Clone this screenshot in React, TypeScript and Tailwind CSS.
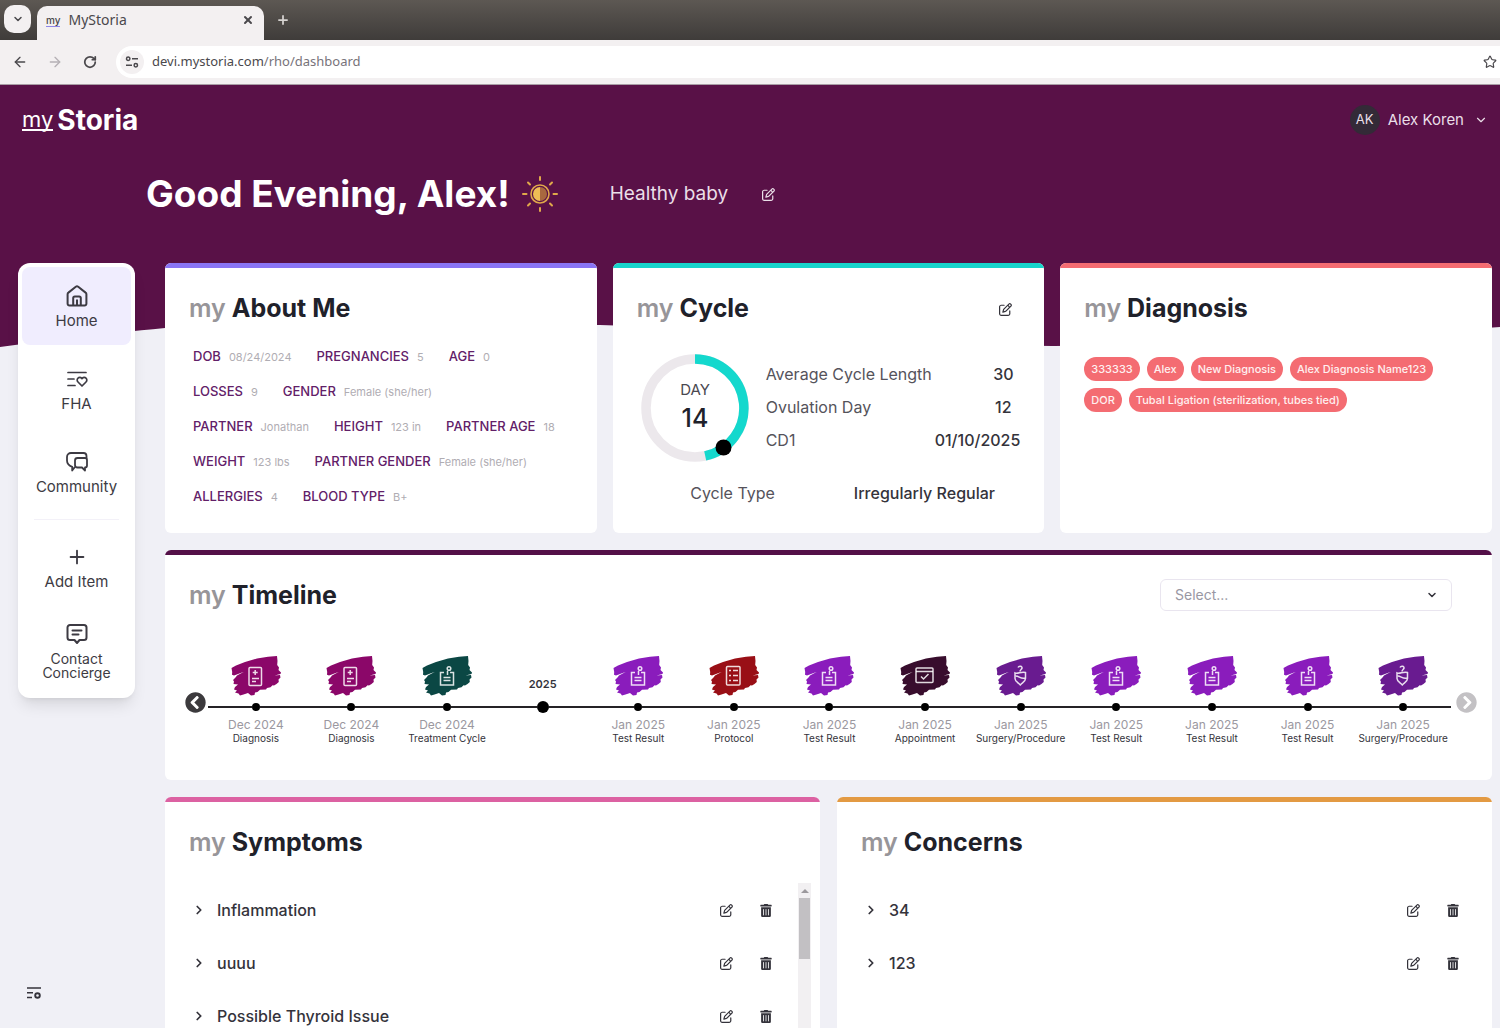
import React from 'react';
import {
    FaChevronCircleLeft,
    FaChevronCircleRight,
    FaTrashAlt,
} from 'react-icons/fa';
import { FaRegPenToSquare } from 'react-icons/fa6';
import {
    ArrowLeft,
    ArrowRight,
    ChevronDown,
    ChevronRight,
    Plus,
    RotateCw,
    Star,
    X,
} from 'lucide-react';

type IconProps = { className?: string };

const HomeIcon = ({ className }: IconProps) => (
    <svg
        viewBox="0 0 22 22"
        className={className}
        fill="none"
        stroke="currentColor"
        strokeWidth="2"
        strokeLinejoin="round"
    >
        <path d="M1.600 9.200a2 2 0 0 1 .8-1.600L9.800 1.700a2 2 0 0 1 2.400 0l7.400 5.900a2 2 0 0 1 .8 1.600v9.600a1.800 1.800 0 0 1-1.800 1.800H3.400a1.800 1.800 0 0 1-1.800-1.800Z" />
        <path d="M7.200 20.400v-7.400a1.600 1.600 0 0 1 1.600-1.600h4.400a1.600 1.600 0 0 1 1.600 1.600v7.400M11 14.500v5.500" />
    </svg>
);

const FhaIcon = ({ className }: IconProps) => (
    <svg
        viewBox="0 0 22 22"
        className={className}
        fill="none"
        stroke="currentColor"
        strokeWidth="1.700"
        strokeLinecap="round"
        strokeLinejoin="round"
    >
        <path d="M2 4.500h18M2 11h6M2 17.500h7" />
        <path d="M16 18l-4-4a2.600 2.600 0 0 1 0-3.800 2.500 2.500 0 0 1 3.600 0l.4.5.4-.5a2.500 2.500 0 0 1 3.600 0 2.600 2.600 0 0 1 0 3.800Z" />
    </svg>
);

const CommunityIcon = ({ className }: IconProps) => (
    <svg
        viewBox="0 0 22 22"
        className={className}
        fill="none"
        stroke="currentColor"
        strokeWidth="1.800"
        strokeLinecap="round"
        strokeLinejoin="round"
    >
        <path d="M8.500 16.500 6.200 19.500v-3.700C2.500 14.500 1 12.500 1 9.500V6a4 4 0 0 1 4-4h12.500A3 3 0 0 1 20.500 5v2" />
        <path d="M11.500 7H19a2 2 0 0 1 2 2v5.500a2 2 0 0 1-2 2v3L16 16.500h-4.500a2.500 2.500 0 0 1-2.500-2.500V9.500A2.500 2.500 0 0 1 11.500 7Z" />
    </svg>
);

const ConciergeIcon = ({ className }: IconProps) => (
    <svg
        viewBox="0 0 22 22"
        className={className}
        fill="none"
        stroke="currentColor"
        strokeWidth="2"
        strokeLinecap="round"
        strokeLinejoin="round"
    >
        <path d="M4 2h14a2.500 2.500 0 0 1 2.500 2.500v10A2.500 2.500 0 0 1 18 17h-4.500L11 20l-2.500-3H4a2.500 2.500 0 0 1-2.500-2.500v-10A2.500 2.500 0 0 1 4 2Z" />
        <path d="M6.500 7.500h9M6.500 11.500h6" />
    </svg>
);

const SettingsListIcon = ({ className }: IconProps) => (
    <svg
        viewBox="0 0 16 14"
        className={className}
        fill="none"
        stroke="currentColor"
        strokeWidth="1.500"
    >
        <path d="M1 2h14M1 6.800h6M1 11.500h5" />
        <circle cx="11.500" cy="9.500" r="2.300" strokeWidth="1.900" />
    </svg>
);

const SunIcon = ({ className }: IconProps) => (
    <svg viewBox="0 0 36 36" className={className} fill="none">
        <circle cx="18" cy="18" r="9" fill="#591147" stroke="#e0a84a" strokeWidth="1.600" />
        <path d="M18 11a7 7 0 0 0 0 14Z" fill="#efbd55" />
        <path d="M18 11a7 7 0 0 1 0 14Z" fill="#a8683f" />
        <path
            d="M18 1v3M18 32v3M1 18h3.500M31.500 18H35M6 6.500l2 2M28 8.500l2-2M6 29.500l2-2M28 27.500l2 2"
            stroke="#e0a84a"
            strokeWidth="2"
            strokeLinecap="round"
        />
    </svg>
);

const SiteInfoIcon = ({ className }: IconProps) => (
    <svg
        viewBox="0 0 14 14"
        className={className}
        fill="none"
        stroke="currentColor"
        strokeWidth="1.500"
    >
        <circle cx="3.200" cy="3.800" r="1.700" />
        <path d="M7 3.800h6M1 10.200h6" />
        <circle cx="10.800" cy="10.200" r="1.700" />
    </svg>
);

const glyphs = {
    diagnosis: (
        <>
            <rect x="18" y="11.500" width="12.500" height="18" rx="1" />
            <path d="M24.200 14v5M21.700 16.500h5M21 22.500h7M21 25.500h4" />
        </>
    ),
    result: (
        <>
            <path d="M22 16.500h-3.500v12.500h13v-12.500H28M21.500 21.500h7M21.500 24.500h7" />
            <path d="M25.500 19v-4" />
            <circle cx="27" cy="12.500" r="1.800" />
        </>
    ),
    protocol: (
        <>
            <rect x="17.500" y="10.500" width="13.500" height="18.500" rx="1" />
            <path d="M20 14.500h2M20 19.500h2M20 24.500h2M24 14.500h5M24 19.500h5M24 24.500h5" />
        </>
    ),
    appointment: (
        <>
            <rect x="16" y="12" width="17" height="14.500" rx="1" />
            <path d="M16 15.500h17M21 20.500l2.500 2.500 5-5" />
        </>
    ),
    surgery: (
        <>
            <path d="M22 11.500c1-2 4.500-1.500 4 .8-.3 1.200-2 1.500-2 3.200M19 17c3 1.500 6-2 10.500-.5v6c0 3-3 4-5.200 6.500-2.300-2.500-5.300-3.500-5.300-6.500Z" />
            <path d="M19.500 20c3-.5 5.500 3.500 9.500 2" />
        </>
    ),
};

type Glyph = keyof typeof glyphs;

const BrushIcon = ({ color, glyph }: { color: string; glyph: Glyph }) => (
    <svg viewBox="0 0 50 40" className="h-10 w-[50px]" aria-hidden="true">
        <path
            fill={color}
            d="M.5 12 5 9.500 14 6 26 2.500 37 .8 46 0l.5 5-.3 4L48 11.500 47.500 14l2.500 2.500-.5 1.500-6 1.500 5.500-.4.500 2.500-2 2 .3 2.500-2.300 2-2.500 1.500-1.500-.3-2 2L36 32l-1 1.500-6 .3-2.500 2.200-2.500.5-.5 2.500-3.500.5-3-2.500-1.500.5-3 1L9 39.500l-1.500-2-3.500-1 2-2L3 33.500 4 31l3-2.500-4.500-.5.500-2.500-1-1.500 2.500-2.500L6 19.500l7-3.700L3 19.500l-2-.7L1.200 16Z"
        />
        <g fill="none" stroke="#fff" strokeOpacity=".85" strokeWidth="1.500">
            {glyphs[glyph]}
        </g>
    </svg>
);

const timeline: {
    date?: string;
    year?: string;
    type?: string;
    color?: string;
    glyph?: Glyph;
}[] = [
    { date: 'Dec 2024', type: 'Diagnosis', color: '#8b0769', glyph: 'diagnosis' },
    { date: 'Dec 2024', type: 'Diagnosis', color: '#8b0769', glyph: 'diagnosis' },
    { date: 'Dec 2024', type: 'Treatment Cycle', color: '#0b4744', glyph: 'result' },
    { year: '2025' },
    { date: 'Jan 2025', type: 'Test Result', color: '#8a1cbc', glyph: 'result' },
    { date: 'Jan 2025', type: 'Protocol', color: '#990f16', glyph: 'protocol' },
    { date: 'Jan 2025', type: 'Test Result', color: '#8a1cbc', glyph: 'result' },
    { date: 'Jan 2025', type: 'Appointment', color: '#380d2d', glyph: 'appointment' },
    { date: 'Jan 2025', type: 'Surgery/Procedure', color: '#691b90', glyph: 'surgery' },
    { date: 'Jan 2025', type: 'Test Result', color: '#8a1cbc', glyph: 'result' },
    { date: 'Jan 2025', type: 'Test Result', color: '#8a1cbc', glyph: 'result' },
    { date: 'Jan 2025', type: 'Test Result', color: '#8a1cbc', glyph: 'result' },
    { date: 'Jan 2025', type: 'Surgery/Procedure', color: '#691b90', glyph: 'surgery' },
];

const about = [
    [
        ['DOB', '08/24/2024'],
        ['PREGNANCIES', '5'],
        ['AGE', '0'],
    ],
    [
        ['LOSSES', '9'],
        ['GENDER', 'Female (she/her)'],
    ],
    [
        ['PARTNER', 'Jonathan'],
        ['HEIGHT', '123 in'],
        ['PARTNER AGE', '18'],
    ],
    [
        ['WEIGHT', '123 lbs'],
        ['PARTNER GENDER', 'Female (she/her)'],
    ],
    [
        ['ALLERGIES', '4'],
        ['BLOOD TYPE', 'B+'],
    ],
];

const cycle = [
    ['Average Cycle Length', '30'],
    ['Ovulation Day', '12'],
    ['CD1', '01/10/2025'],
];

const diagnoses = [
    '333333',
    'Alex',
    'New Diagnosis',
    'Alex Diagnosis Name123',
    'DOR',
    'Tubal Ligation (sterilization, tubes tied)',
];

const Card = ({
    title,
    bar,
    className = '',
    action,
    children,
}: {
    title: string;
    bar: string;
    className?: string;
    action?: React.ReactNode;
    children: React.ReactNode;
}) => (
    <section
        className={`flex min-w-0 flex-col overflow-hidden rounded-md bg-white ${className}`}
    >
        <div className={`h-[5px] shrink-0 ${bar}`}></div>
        <div className="flex h-14 shrink-0 items-end justify-between pl-6">
            <h2 className="text-[25px] leading-8 font-bold text-[#20212a]">
                <span className="font-semibold text-[#979599]">my</span> {title}
            </h2>
            {action}
        </div>
        {children}
    </section>
);

const NavItem = ({
    icon,
    label,
    active,
}: {
    icon: React.ReactNode;
    label: string;
    active?: boolean;
}) => (
    <a
        href="#"
        className={`flex h-[78px] flex-col items-center gap-1 rounded-lg pt-[18px] ${active ? 'bg-[#f0edfe]' : ''}`}
    >
        {icon}
        <span className="text-[15px] leading-5">{label}</span>
    </a>
);

const ItemRow = ({ label }: { label: string }) => (
    <li className="flex h-[53px] items-center">
        <button
            className="flex flex-1 items-center gap-[11px] text-left"
            aria-label={`Expand ${label}`}
        >
            <ChevronRight className="size-[14px]" strokeWidth={3} />
            <span className="text-base font-medium">{label}</span>
        </button>
        <button aria-label={`Edit ${label}`} className="mr-[27px] pt-[2px]">
            <FaRegPenToSquare className="size-[13px]" />
        </button>
        <button aria-label={`Delete ${label}`} className="pt-[2px]">
            <FaTrashAlt className="h-[13px] w-3" />
        </button>
    </li>
);

const BrowserBar = () => (
    <div className="shrink-0 font-['Noto_Sans',sans-serif] text-[#4a484c]">
        <div className="flex h-10 items-end bg-linear-to-b from-[#5d5853] to-[#3f3c3a] pl-1">
            <button
                aria-label="Search tabs"
                className="mb-[7px] flex h-7 w-[27px] items-center justify-center rounded-[10px] bg-[#f3f0f1]"
            >
                <ChevronDown className="size-3" strokeWidth={3} />
            </button>
            <div className="ml-[6px] flex h-[34px] w-[227px] items-center rounded-t-[10px] bg-[#f3f0f1] pr-[10px] pb-[6px] pl-[9px]">
                <span className="border-b border-[#8f86e8] font-['Inter',sans-serif] text-[10px] leading-3 font-medium">
                    my
                </span>
                <span className="ml-2 flex-1 text-sm leading-5">MyStoria</span>
                <button aria-label="Close tab">
                    <X className="size-3" strokeWidth={4} />
                </button>
            </div>
            <button aria-label="New tab" className="mb-[13px] ml-3 text-[#d6d3d1]">
                <Plus className="size-[14px]" strokeWidth={3} />
            </button>
        </div>
        <div className="flex h-[45px] items-center border-b border-[#a89da5] bg-[#f3f0f1] pl-3">
            <button aria-label="Back">
                <ArrowLeft className="size-4" strokeWidth={2} />
            </button>
            <button aria-label="Forward" className="ml-[19px] text-[#b5b0b5]">
                <ArrowRight className="size-4" strokeWidth={2} />
            </button>
            <button aria-label="Reload" className="ml-5">
                <RotateCw className="size-[14px]" strokeWidth={3} />
            </button>
            <div className="ml-[19px] flex h-8 flex-1 items-center rounded-l-full bg-white pl-1">
                <div className="flex size-6 items-center justify-center rounded-full bg-[#f3f0f1]">
                    <SiteInfoIcon className="size-[14px]" />
                </div>
                <div className="ml-2 flex-1 text-[13px]">
                    devi.mystoria.com
                    <span className="text-[#77737a]">/rho/dashboard</span>
                </div>
                <button aria-label="Bookmark" className="mr-[3px]">
                    <Star className="size-[14px]" strokeWidth={2} />
                </button>
            </div>
        </div>
    </div>
);

const Header = () => (
    <header className="text-white">
        <div className="flex h-[238px] flex-col bg-[#591147]">
            <div className="flex h-[70px] items-center justify-between pr-3 pl-[22px]">
                <a href="#" className="flex items-center gap-1">
                    <span className="border-b-2 border-white text-[22px] leading-5">my</span>
                    <span className="text-[28px] leading-8 font-bold">Storia</span>
                </a>
                <button className="flex items-center gap-2 text-[#eadfe8]">
                    <span className="flex size-[30px] items-center justify-center rounded-full bg-[#332a37] text-[13px]">
                        AK
                    </span>
                    <span className="text-[15px]">Alex Koren</span>
                    <ChevronDown className="ml-[2px] size-[14px]" strokeWidth={2} />
                </button>
            </div>
            <div className="mt-[14px] flex h-[50px] items-center pl-[146px]">
                <h1 className="text-[37px] font-bold">Good Evening, Alex!</h1>
                <SunIcon className="ml-[12px] size-9" />
                <p className="ml-[52px] text-[19px] text-[#eadfe8]">Healthy baby</p>
                <button aria-label="Edit goal" className="ml-[34px] text-[#eadfe8]">
                    <FaRegPenToSquare className="size-[13px]" />
                </button>
            </div>
        </div>
        <svg
            viewBox="0 0 1500 24"
            preserveAspectRatio="none"
            className="block h-6 w-full"
            aria-hidden="true"
        >
            <path
                fill="#591147"
                d="M0 0H1500V4C1400 10 1200 23 1053 23 900 22 800 8 600 2 400 -1 250 -3 165 5 100 11 50 17 0 24Z"
            />
        </svg>
    </header>
);

const App = () => {
    return (
        <div className="relative flex h-screen flex-col overflow-hidden bg-[#f0f0f6] font-['Inter',sans-serif] text-[#34333b]">
            <BrowserBar />
            <div className="min-h-0 flex-1 overflow-hidden">
                <Header />
                <main className="relative -mt-[84px] flex items-start gap-[30px] pr-2 pl-[18px]">
                    <nav className="w-[117px] shrink-0 rounded-xl bg-white p-1 pb-[18px] text-[#3d3b43] shadow-lg">
                        <div className="flex flex-col gap-[5px]">
                            <NavItem active icon={<HomeIcon className="size-[22px]" />} label="Home" />
                            <NavItem icon={<FhaIcon className="size-[22px]" />} label="FHA" />
                            <NavItem
                                icon={<CommunityIcon className="size-[22px]" />}
                                label="Community"
                            />
                        </div>
                        <hr className="mx-3 my-2 border-[#f3f1f8]" />
                        <NavItem icon={<Plus className="size-[22px]" />} label="Add Item" />
                        <a href="#" className="flex flex-col items-center gap-[7px] pt-[17px]">
                            <ConciergeIcon className="size-[22px]" />
                            <span className="text-center text-sm leading-[14px]">
                                Contact
                                <br />
                                Concierge
                            </span>
                        </a>
                    </nav>

                    <div className="flex min-w-0 flex-1 flex-col gap-[17px]">
                        <div className="grid grid-cols-3 gap-4">
                            <Card title="About Me" bar="bg-[#8a75f5]" className="h-[270px]">
                                <dl className="mt-[23px] flex flex-col gap-[15px] pl-7">
                                    {about.map((row, i) => (
                                        <div key={i} className="flex gap-[25px]">
                                            {row.map(([label, value]) => (
                                                <div
                                                    key={label}
                                                    className="flex h-5 items-center gap-2 whitespace-nowrap"
                                                >
                                                    <dt className="text-[13px] font-medium text-[#622068]">
                                                        {label}
                                                    </dt>
                                                    <dd className="text-[11px] text-[#b0adb3]">
                                                        {value}
                                                    </dd>
                                                </div>
                                            ))}
                                        </div>
                                    ))}
                                </dl>
                            </Card>

                            <Card
                                title="Cycle"
                                bar="bg-[#17d5cb]"
                                className="h-[270px]"
                                action={
                                    <button aria-label="Edit cycle" className="mr-8 mb-2">
                                        <FaRegPenToSquare className="size-[13px]" />
                                    </button>
                                }
                            >
                                <div className="mt-[29px] flex items-start gap-4 pr-6 pl-[27px]">
                                    <svg viewBox="0 0 110 110" className="size-[110px] shrink-0">
                                        <g fill="none" strokeWidth="9.500">
                                            <circle cx="55" cy="55" r="49" stroke="#ece8ec" />
                                            <path
                                                d="M55 6A49 49 0 0 1 65.200 102.900"
                                                stroke="#14d8cd"
                                            />
                                        </g>
                                        <circle cx="83.500" cy="94.500" r="8" fill="#000" />
                                        <text
                                            x="55"
                                            y="42"
                                            textAnchor="middle"
                                            className="fill-[#4a4850] text-[15px]"
                                        >
                                            DAY
                                        </text>
                                        <text
                                            x="55"
                                            y="74"
                                            textAnchor="middle"
                                            className="fill-[#20212a] text-[25px] font-medium"
                                        >
                                            14
                                        </text>
                                    </svg>
                                    <dl className="flex-1 pt-1">
                                        {cycle.map(([label, value]) => (
                                            <div
                                                key={label}
                                                className="flex h-[33px] items-center justify-between"
                                            >
                                                <dt className="text-base text-[#55535b]">{label}</dt>
                                                <dd className="min-w-[34px] text-center text-base font-medium">
                                                    {value}
                                                </dd>
                                            </div>
                                        ))}
                                    </dl>
                                </div>
                                <dl className="mt-[18px] grid grid-cols-2 px-6 text-center text-base">
                                    <dt className="text-[#55535b]">Cycle Type</dt>
                                    <dd className="font-medium">Irregularly Regular</dd>
                                </dl>
                            </Card>

                            <Card title="Diagnosis" bar="bg-[#f46c72]" className="h-[270px]">
                                <ul className="mt-[33px] flex flex-wrap gap-x-[7px] gap-y-[7px] px-6">
                                    {diagnoses.map((item) => (
                                        <li
                                            key={item}
                                            className="rounded-full bg-[#f46c72] px-[7px] text-[11px] leading-6 font-medium text-[#fff0f0]"
                                        >
                                            {item}
                                        </li>
                                    ))}
                                </ul>
                            </Card>
                        </div>

                        <Card
                            title="Timeline"
                            bar="bg-[#541048]"
                            className="h-[230px]"
                            action={
                                <div className="relative mr-10 w-[292px]">
                                    <select
                                        aria-label="Filter timeline"
                                        className="block h-8 w-full appearance-none rounded-md border border-[#e9e5ef] bg-white px-[14px] text-sm text-[#9997a3]"
                                    >
                                        <option>Select...</option>
                                    </select>
                                    <ChevronDown
                                        className="pointer-events-none absolute top-[10px] right-[14px] size-3"
                                        strokeWidth={3}
                                    />
                                </div>
                            }
                        >
                            <div className="mt-11 flex items-start pr-[15px] pl-5">
                                <button aria-label="Earlier" className="mt-[37px] mr-[2px]">
                                    <FaChevronCircleLeft className="size-[21px] text-[#3c3a3d]" />
                                </button>
                                <ol className="flex flex-1">
                                    {timeline.map((item, i) => (
                                        <li
                                            key={i}
                                            className="flex min-w-0 flex-1 flex-col items-center"
                                        >
                                            <div className="flex h-[42px] items-center justify-center">
                                                {item.glyph && item.color ? (
                                                    <BrushIcon color={item.color} glyph={item.glyph} />
                                                ) : (
                                                    <span className="mt-4 text-[11px] font-semibold">
                                                        {item.year}
                                                    </span>
                                                )}
                                            </div>
                                            <div className="mt-1 flex h-3 w-full items-center">
                                                <span className="h-[2px] flex-1 bg-[#252326]"></span>
                                                <span
                                                    className={`rounded-full bg-black ${item.year ? 'size-3' : 'size-2'}`}
                                                ></span>
                                                <span className="h-[2px] flex-1 bg-[#252326]"></span>
                                            </div>
                                            <span className="mt-1 text-xs leading-4 text-[#9b989f]">
                                                {item.date}
                                            </span>
                                            <span className="text-[10px] leading-[10px] whitespace-nowrap">
                                                {item.type}
                                            </span>
                                        </li>
                                    ))}
                                </ol>
                                <button aria-label="Later" className="mt-[37px] ml-[5px]">
                                    <FaChevronCircleRight className="size-[21px] text-[#c3c1c4]" />
                                </button>
                            </div>
                        </Card>

                        <div className="grid grid-cols-2 gap-[17px]">
                            <Card title="Symptoms" bar="bg-[#dc61a2]" className="h-[270px]">
                                <div className="mt-[25px] flex min-h-0 flex-1 pr-[9px] pl-[27px]">
                                    <ul className="flex-1 pr-[26px]">
                                        <ItemRow label="Inflammation" />
                                        <ItemRow label="uuuu" />
                                        <ItemRow label="Possible Thyroid Issue" />
                                    </ul>
                                    <div className="flex w-[13px] flex-col items-center bg-[#f2f0f2]">
                                        <span className="flex h-[15px] items-center">
                                            <span className="border-x-4 border-b-4 border-x-transparent border-b-[#9c999d]"></span>
                                        </span>
                                        <span className="h-[61px] w-[11px] bg-[#c2c0c3]"></span>
                                    </div>
                                </div>
                            </Card>
                            <Card title="Concerns" bar="bg-[#e39a43]" className="h-[270px]">
                                <ul className="mt-[25px] pr-[33px] pl-[27px]">
                                    <ItemRow label="34" />
                                    <ItemRow label="123" />
                                </ul>
                            </Card>
                        </div>
                    </div>
                </main>
            </div>
            <button aria-label="Display settings" className="absolute bottom-7 left-[26px]">
                <SettingsListIcon className="h-[14px] w-4" />
            </button>
        </div>
    );
};

export default App;
